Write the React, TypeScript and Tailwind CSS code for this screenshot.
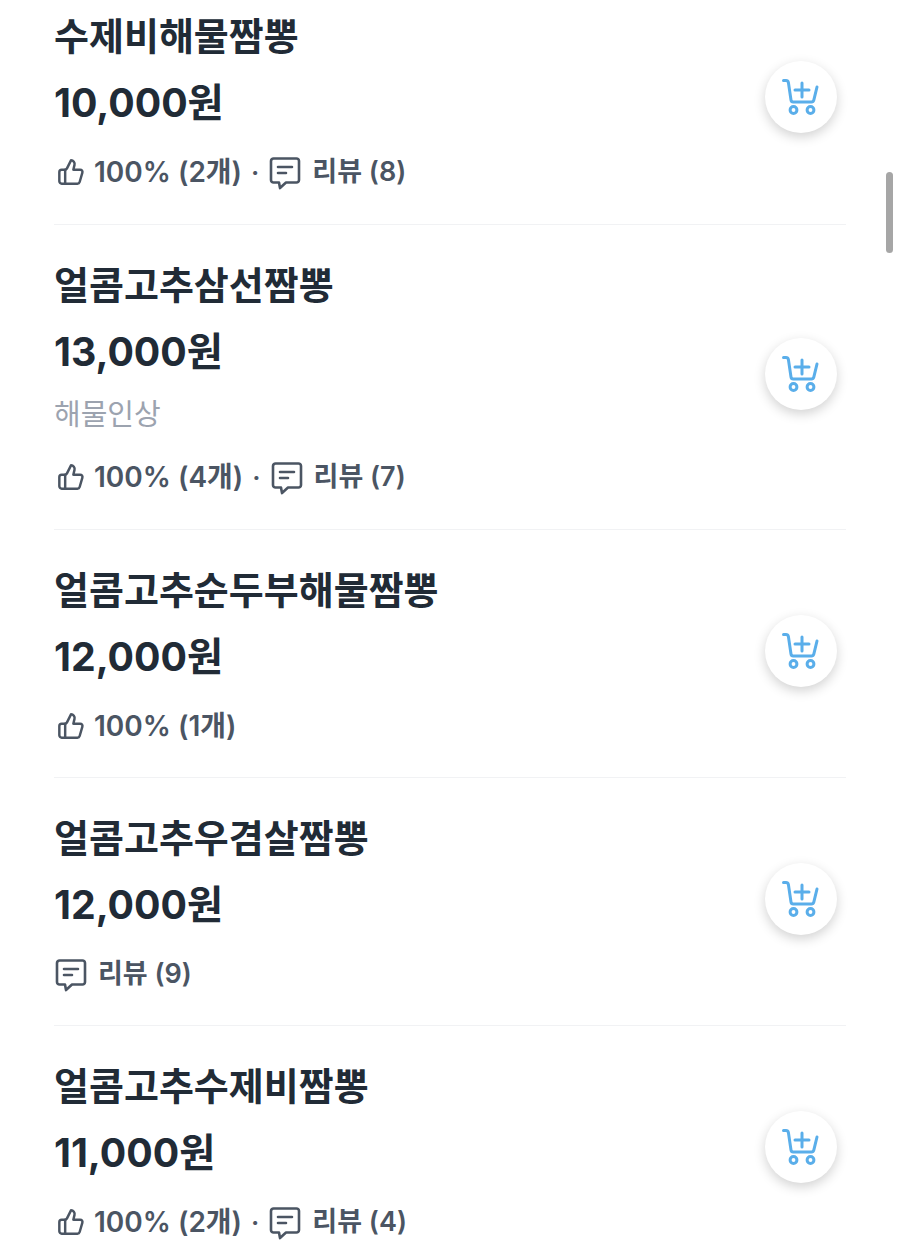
import { ThumbsUp } from "lucide-react";

const FONT = "font-['Inter','Noto_Sans_CJK_KR',sans-serif]";

type Menu = {
  name: string;
  price: string;
  desc?: string;
  like?: string;
  review?: string;
};

const menus: Menu[] = [
  { name: "수제비해물짬뽕", price: "10,000원", like: "100% (2개)", review: "리뷰 (8)" },
  { name: "얼콤고추삼선짬뽕", price: "13,000원", desc: "해물인상", like: "100% (4개)", review: "리뷰 (7)" },
  { name: "얼콤고추순두부해물짬뽕", price: "12,000원", like: "100% (1개)" },
  { name: "얼콤고추우겸살짬뽕", price: "12,000원", review: "리뷰 (9)" },
  { name: "얼콤고추수제비짬뽕", price: "11,000원", like: "100% (2개)", review: "리뷰 (4)" },
];

function ReviewIcon() {
  return (
    <svg className="mt-[2px]" width="34" height="34" viewBox="0 0 34 34" fill="none" stroke="#4b5563" strokeWidth="2.6" strokeLinejoin="round" strokeLinecap="round">
      <path d="M5.5 2.5h23a2.5 2.5 0 0 1 2.5 2.5v19a2.5 2.5 0 0 1-2.5 2.5H18l-6 5.5-1-5.5H5.5A2.5 2.5 0 0 1 3 24V5a2.5 2.5 0 0 1 2.5-2.5z" />
      <path d="M10 11h14M10 17h8" />
    </svg>
  );
}

function CartPlusIcon() {
  return (
    <svg width="38" height="38" viewBox="0 0 38 38" fill="none" stroke="#5aaeea" strokeWidth="3" strokeLinecap="round" strokeLinejoin="round">
      <path d="M1.5 2.5h2.5c1.3 0 2.1.7 2.4 2L9 22c.2 1.300 1 2 2.200 2h18.300c1.200 0 2-.7 2.300-1.900L35 9" />
      <path d="M20 5v14M13 12h14" />
      <circle cx="11.500" cy="32" r="3.400" />
      <circle cx="28.500" cy="32" r="3.400" />
    </svg>
  );
}

function MenuRow({ menu, first }: { menu: Menu; first: boolean }) {
  return (
    <div className={`flex items-center border-[#f1f2f4] ${first ? "pt-[12px] pb-[34px]" : "border-t pt-[36px]"} ${menu.desc ? "pb-[34px]" : first ? "" : "pb-[33px]"}`}>
      <div className="flex-1">
        <div className="h-[48px] text-[38px] leading-[48px] font-semibold text-[#212b36]">{menu.name}</div>
        <div className="mt-[19px] h-[48px] text-[39.250px] leading-[48px] font-bold text-[#212b36]">{menu.price}</div>
        {menu.desc && <div className="mt-[24px] h-[30px] text-[29px] leading-[30px] text-[#9ca3af]">{menu.desc}</div>}
        <div className={`flex h-[36px] items-center text-[#4b5563] ${menu.desc ? "mt-[29px]" : "mt-[27px]"}`}>
          {menu.like && (
            <>
              <ThumbsUp size={28} strokeWidth={2.1} className="ml-[3px] mr-[9px]" />
              <span className="text-[28px] font-semibold">{menu.like}</span>
            </>
          )}
          {menu.like && menu.review && <span className="mx-[9px] text-[26px] font-semibold">·</span>}
          {menu.review && (
            <>
              <ReviewIcon />
              <span className="ml-[10px] text-[27px] font-semibold">{menu.review}</span>
            </>
          )}
        </div>
      </div>
      <button className="mb-[9px] mr-[9px] flex h-[72px] w-[72px] items-center justify-center rounded-full bg-white shadow-[0_4px_12px_rgba(0,0,0,0.18)]">
        <CartPlusIcon />
      </button>
    </div>
  );
}

export default function App() {
  return (
    <div className={`relative h-[1254px] w-[900px] overflow-hidden bg-white ${FONT}`}>
      <div className="ml-[54px] w-[792px]">
        {menus.map((menu, i) => (
          <MenuRow key={menu.name} menu={menu} first={i === 0} />
        ))}
      </div>
      <div className="absolute left-[886px] top-[172px] h-[81px] w-[7px] rounded-full bg-[#a6a6a6]" />
    </div>
  );
}
